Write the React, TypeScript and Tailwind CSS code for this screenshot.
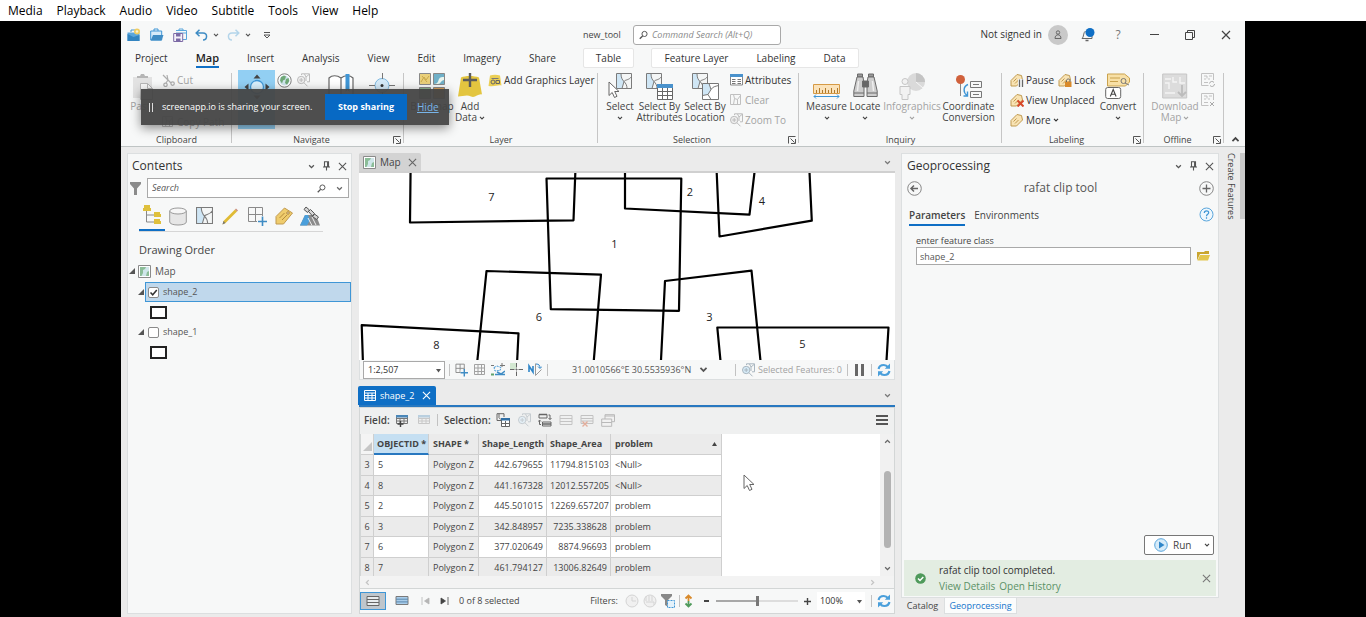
import React from "react";

type Kids = { children?: React.ReactNode };

const Caret = ({ s = 7, className = "" }: { s?: number; className?: string }) => (
  <svg width={s} height={s} viewBox="0 0 8 8" className={className} fill="none" stroke="currentColor" strokeWidth="1.5">
    <path d="M1.3 2.6 4 5.3 6.7 2.6" />
  </svg>
);

const Close = ({ s = 9 }: { s?: number }) => (
  <svg width={s} height={s} viewBox="0 0 10 10" fill="none" stroke="currentColor" strokeWidth="1.2">
    <path d="M1 1 9 9M9 1 1 9" />
  </svg>
);

const Pin = () => (
  <svg width="9" height="11" viewBox="0 0 9 11" fill="none" stroke="currentColor" strokeWidth="1.1">
    <path d="M2.500.8h4v5h-4zM5.600.8v5M1 6h7M4.500 6V9.500" />
  </svg>
);

const Magnifier = ({ s = 12 }: { s?: number }) => (
  <svg width={s} height={s} viewBox="0 0 12 12" fill="none" stroke="#555" strokeWidth="1.3">
    <circle cx="7.3" cy="4.6" r="3.4" />
    <path d="M4.8 7.2 1 11" strokeWidth="1.8" />
  </svg>
);

const Refresh = () => (
  <svg width="14" height="14" viewBox="0 0 14 14" fill="none" stroke="#4a9fdb" strokeWidth="2.200">
    <path d="M1.600 6C2 3.600 4 2 6.800 2c1.900 0 3.200.8 4 2.100M12.400 8c-.4 2.400-2.400 4-5.200 4-1.900 0-3.200-.8-4-2.100" />
    <path d="M13 .6v5.200H7.800zM1 13.400V8.200h5.200z" fill="#4a9fdb" stroke="none" />
  </svg>
);

const Launcher = () => (
  <button aria-label="More options" className="absolute right-[3px] bottom-[2px] text-[#555]">
    <svg width="8" height="8" viewBox="0 0 8 8" fill="none" stroke="currentColor">
      <path d="M.5 7.500V.5H7.500M2.500 2.500 6.500 6.500M7.500 3V7.500H3" />
    </svg>
  </button>
);

const MapParcel = ({ x = 0, y = 0, s = 16 }: { x?: number; y?: number; s?: number }) => (
  <g transform={`translate(${x} ${y}) scale(${s / 16})`}>
    <path d="M.5.5h15v15H.5z" fill="#f4f6f6" />
    <path d="M.5.5H5c0 4 1 6 3 8l-2 7H.5z" fill="#cfe6f5" />
    <path d="M.5.5h15v15H.5zM5 .5c0 4 1 6 3 8l-2 7M8 8.500c1-2 5-1 7.500-5M8 8.500c2 2 3 4 3 7" fill="none" stroke="#7b7b7b" />
  </g>
);

const PasteIcon = () => (
  <svg width="24" height="28" viewBox="0 0 24 28">
    <path d="M2 4h19v21H2z" fill="#e2e2e2" />
    <path d="M6 3h3l1-2h3l1 2h3v2H6z" fill="#b5b5b5" />
    <path d="M9.500 10.500h7l5 5v11h-12z" fill="#f6f6f6" stroke="#b5b5b5" />
    <path d="M16.500 10.500v5h5" fill="none" stroke="#b5b5b5" />
  </svg>
);

const CutIcon = () => (
  <svg width="13" height="13" viewBox="0 0 13 13" fill="none" stroke="#adadad" strokeWidth="1.200">
    <path d="M1 1l8 8M5 1l1 5 3 3M6 6 4 9" />
    <circle cx="10.600" cy="9.600" r="1.700" />
    <circle cx="3.500" cy="10.800" r="1.700" />
  </svg>
);

const ExploreIcon = () => (
  <svg width="28" height="28" viewBox="0 0 28 28">
    <circle cx="14" cy="14" r="6.500" fill="#d8effc" stroke="#3f96d6" strokeWidth="1.300" />
    <path d="M14 1.500l3.500 4h-7zM14 26.500l3.500-4h-7zM1.500 14l4-3.500v7zM26.500 14l-4-3.500v7z" fill="#444" />
  </svg>
);

const GlobeIcon = () => (
  <svg width="15" height="15" viewBox="0 0 15 15">
    <circle cx="7.500" cy="7.500" r="6.700" fill="#fff" stroke="#7f7f7f" />
    <circle cx="7.500" cy="7.500" r="5" fill="#cfe4ec" />
    <path d="M4 4l3-1.500 2 1-1 3-2 1-1 3-2-3zM9 6l2.500-1 .8 3L10 11.800 8 10z" fill="#6fa877" />
  </svg>
);

const ZoomSelIcon = ({ c = "#bcbcbc", lens = "#eeeeee" }: { c?: string; lens?: string }) => (
  <svg width="14" height="14" viewBox="0 0 14 14" fill="none" stroke={c}>
    <path d="M5.500 2V.8h8v8H11M8.500 1l1.500 3 3-2.500M10 4v4" />
    <circle cx="5.200" cy="7" r="3.700" fill={lens} />
    <path d="M5.200 5v4M3.200 7h4M8 9.800l3.500 3.500" />
  </svg>
);

const BookmarkIcon = () => (
  <svg width="28" height="28" viewBox="0 0 28 28" fill="none" stroke="#666" strokeWidth="1.200">
    <path d="M2 22V5c3-3 8-3 12 0 4-3 9-3 12 0v17M14 5v18" fill="#fff" />
    <path d="M18.500 1h4v18l-2-2-2 2z" fill="#3f96d6" stroke="none" />
  </svg>
);

const GoToIcon = () => (
  <svg width="26" height="26" viewBox="0 0 26 26" fill="none" stroke="#777">
    <circle cx="13" cy="12.500" r="7" fill="#d6ebf9" stroke="#7fb9e0" />
    <path d="M13.500 0v6M13.500 19v6M0 12.500h6M20 12.500h6" />
    <circle cx="13" cy="12.500" r="1.500" fill="#333" stroke="none" />
  </svg>
);

const BasemapIcon = () => (
  <svg width="26" height="26" viewBox="0 0 26 26" stroke="#888">
    <path d="M.5.5h11v11H.5z" fill="#ead07a" />
    <path d="M2 9l3-5 2 3 3-4M3 3l5 6" stroke="#c9a84a" fill="none" />
    <path d="M14.500.5h11v11h-11z" fill="#6fb0c8" />
    <path d="M15 11c4 0 4-3 5-5s3-2 5-2v3c-3 0-3 4-6 4z" fill="#eaf5ee" stroke="none" />
    <path d="M.5 14.500h11v11H.5z" fill="#8fb38d" />
    <path d="M14.500 14.500h11v11h-11z" fill="#d9a05a" />
  </svg>
);

const AddDataIcon = () => (
  <svg width="26" height="26" viewBox="0 0 26 26">
    <path d="M4 4.500c4-2 13-2 18 0l3 17c-4-1-7 4-11 2s-8 0-13 0z" fill="#e3c53f" />
    <path d="M13 0v14M6 7h14" stroke="#5b5b5b" strokeWidth="2.400" />
  </svg>
);

const GraphicsIcon = () => (
  <svg width="14" height="13" viewBox="0 0 14 13">
    <path d="M2 1.500c3-1 7-1 10 0l1.500 10c-4-1-6 1.500-13 .5z" fill="#ebcf55" />
    <path d="M3.500 4.500h7" stroke="#777" />
    <circle cx="5" cy="8" r="2" fill="none" stroke="#666" />
    <path d="M8 6.500h3.500v3H8z" fill="none" stroke="#666" />
  </svg>
);

const Pointer = ({ x, y }: { x: number; y: number }) => (
  <path transform={`translate(${x} ${y})`} d="M0 0v13.500l3.200-3 2.300 5 2.500-1.200-2.300-4.800H10z" fill="#fff" stroke="#666" />
);

const SelectIcon = () => (
  <svg width="26" height="27" viewBox="0 0 26 27">
    <MapParcel x={9} y={0} s={16} />
    <Pointer x={2} y={9} />
  </svg>
);

const SelectAttrIcon = () => (
  <svg width="27" height="27" viewBox="0 0 27 27">
    <MapParcel x={0} y={0} s={16} />
    <path d="M11.500 11.500h15v15h-15z" fill="#fff" stroke="#666" />
    <path d="M11 11h16v4H11z" fill="#4a92cc" />
    <path d="M11.500 18.500h15M11.500 22.500h15M16.500 15v11.500M21.500 15v11.500" stroke="#666" />
  </svg>
);

const SelectLocIcon = () => (
  <svg width="27" height="27" viewBox="0 0 27 27">
    <MapParcel x={0} y={0} s={16} />
    <path d="M10.500 10.500h16v16h-16z" fill="#fff" />
    <path d="M10.500 10.500H17l2 6-3 5-5.500 1z" fill="#cfe6f5" />
    <path d="M10.500 10.500h16v16h-16zM17 10.500l2 6-3 5-5.500 1M19 16.500c2-3 4-3 7.500-4M16 21.500l3 5" fill="none" stroke="#777" />
  </svg>
);

const AttrIcon = () => (
  <svg width="13" height="12" viewBox="0 0 13 12">
    <path d="M.5.5h12v10.500H.5z" fill="#fff" stroke="#888" />
    <path d="M0 0h13v3H0z" fill="#4a92cc" />
    <path d="M2 5.500h3.500M2 7.500h3.500M2 9.500h3.500M7.500 5.500H11M7.500 7.500H11M7.500 9.500H11" stroke="#777" />
  </svg>
);

const ClearIcon = () => (
  <svg width="12" height="12" viewBox="0 0 12 12" fill="none" stroke="#c0c0c0">
    <path d="M.5.5h10v10H.5zM3.500.5l1 4-1 6M4.500 4.500l3 1 3-4M7.500 5.500v5" />
  </svg>
);

const RulerIcon = () => (
  <svg width="27" height="27" viewBox="0 0 27 27" fill="none">
    <path d="M.5 11.500h26v9H.5z" fill="#fbe3bb" stroke="#d69a45" />
    <path d="M3.500 20v-3M6.500 20v-5M9.500 20v-3M12.500 20v-5M15.500 20v-3M18.500 20v-5M21.500 20v-3M24.500 20v-5" stroke="#b07a2c" />
    <path d="M1 23.500h25M3 21.500l-2 2 2 2M24 21.500l2 2-2 2" stroke="#3f96d6" />
  </svg>
);

const BinocularIcon = () => (
  <svg width="25" height="26" viewBox="0 0 25 26" stroke="#6b6b6b" fill="#cdcdcd">
    <path d="M4.500 1h5v3h-5zM15.500 1h5v3h-5z" fill="#9a9a9a" />
    <path d="M4 4h6l1 6v13.500H.8V18z" />
    <path d="M21 4h-6l-1 6v13.500h10.200V18z" />
    <path d="M9.500 8h6v6h-6z" fill="#666" />
    <path d="M1 20h10M14 20h10" />
    <path d="M5.500 8 4.500 18M19.500 8l1 10" stroke="#efefef" strokeWidth="1.500" />
  </svg>
);

const InfographicsIcon = () => (
  <svg width="28" height="27" viewBox="0 0 28 27">
    <circle cx="18" cy="9" r="9" fill="#dadada" />
    <path d="M18 9V0a9 9 0 0 1 9 9z" fill="#c4c4c4" />
    <path d="M18 9l7 6" stroke="#f7f7f7" />
    <circle cx="7" cy="8.500" r="3" fill="#f2f2f2" stroke="#c6c6c6" />
    <path d="M2 13.500h10v8h-2v5H4v-5H2z" fill="#f2f2f2" stroke="#c6c6c6" />
  </svg>
);

const CoordIcon = () => (
  <svg width="27" height="27" viewBox="0 0 27 27" fill="none">
    <path d="M5.500 8v15" stroke="#888" />
    <circle cx="5.500" cy="6.500" r="4.500" fill="#d0613c" />
    <path d="M13 11.500c-5 2-5 8-1 11M12.500 18.500v4.500H8.500" stroke="#3f96d6" strokeWidth="1.400" />
    <path d="M15.500 8.500h11v6h-11zM15.500 18.500h11v6h-11zM18 11.500h6M18 21.500h6" stroke="#777" />
  </svg>
);

const Tag = ({ children }: Kids) => (
  <svg width="14" height="14" viewBox="0 0 14 14">
    <path d="M1 7.500 7 1.500l4.500 1 1 4.500-6 6H1z" fill="#f8e3b4" stroke="#c09a50" />
    <path d="M3.500 8.500l3-3M5 10.500l3.500-3.500" stroke="#c09a50" />
    {children}
  </svg>
);

const PauseTag = () => (
  <Tag>
    <path d="M8 6h6v8H8z" fill="#f8f9f9" />
    <path d="M9.500 6.500V14M12.500 6.500V14" stroke="#666" strokeWidth="1.300" />
  </Tag>
);
const LockTag = () => (
  <Tag>
    <path d="M7 8.500h6.500V14H7z" fill="#d98a2b" />
    <path d="M8.500 9V7.500c0-2 3.500-2 3.500 0V9" fill="none" stroke="#666" />
  </Tag>
);
const UnplacedTag = () => (
  <Tag>
    <path d="M7.500 7.500l6 6M13.500 7.500l-6 6" stroke="#d6492a" strokeWidth="2" />
  </Tag>
);

const ConvertIcon = () => (
  <svg width="26" height="27" viewBox="0 0 26 27">
    <path d="M2.500 1h17l5 4v4l-4 4h-18z" fill="#f8e0a6" stroke="#c9a24e" />
    <path d="M5 5h10M5 8.500h8" stroke="#c9a24e" />
    <circle cx="18.500" cy="8" r="2.500" fill="none" stroke="#777" />
    <path d="M20 10l4 2" stroke="#777" />
    <rect x=".7" y="14.500" width="15" height="11" rx="2" fill="#fff" stroke="#666" />
    <path d="M5.300 23.500 8.200 16.500l2.900 7M6.300 21.300h3.800" fill="none" stroke="#444" strokeWidth="1.100" />
  </svg>
);

const DownloadIcon = () => (
  <svg width="26" height="26" viewBox="0 0 26 26">
    <path d="M.7 1h24v24H.7z" fill="#dcdcdc" stroke="#c6c6c6" />
    <path d="M3 6h6M3 10h4v6M11 4v5h4M18 4v6h5M3 20h10" stroke="#f4f4f4" strokeWidth="1.400" fill="none" />
    <path d="M20 12v11M16 19l4 4 4-4" stroke="#bcbcbc" strokeWidth="1.800" fill="none" />
  </svg>
);

const OfflineSmall = ({ x = false }: { x?: boolean }) => (
  <svg width="14" height="14" viewBox="0 0 14 14" fill="none" stroke="#c2c2c2">
    <path d="M12.500 7V.5H.5v12h7M3 3h3v2.500M8 3h3M3 6h2M3 9.500h4M8 5v2" />
    {x ? <path d="M9 9l4 4M13 9l-4 4" stroke="#aaa" /> : <path d="M8.500 10.500a2.500 2.500 0 0 1 4.500-1M13.500 11a2.500 2.500 0 0 1-4.500 1.500" stroke="#aaa" />}
  </svg>
);

function Big({ icon, lines = [], label, caret, inline, dim, className = "" }: { icon: React.ReactNode; lines?: string[]; label?: string; caret?: boolean; inline?: boolean; dim?: boolean; className?: string }) {
  return (
    <button aria-label={label} className={`flex shrink-0 flex-col items-center pt-[3px] leading-[11px] whitespace-nowrap ${dim ? "text-[#a3a3a3]" : "text-[#444]"} ${className}`}>
      <span className="flex h-7 items-start justify-center">{icon}</span>
      {lines.map((l, i) => (
        <span key={l} className="flex items-center gap-[2px]">
          {l}
          {inline && i === lines.length - 1 && <Caret s={6} />}
        </span>
      ))}
      {caret && <Caret s={6} className="mt-[3px]" />}
    </button>
  );
}

function Small({ icon, label, dim, caret }: { icon: React.ReactNode; label: string; dim?: boolean; caret?: boolean }) {
  return (
    <button className={`flex h-5 items-center gap-[2px] whitespace-nowrap ${dim ? "text-[#a3a3a3]" : "text-[#333]"}`}>
      <span className="flex w-[14px] justify-center">{icon}</span>
      {label}
      {caret && <Caret s={6} />}
    </button>
  );
}

function Group({ name, launcher, className, children }: Kids & { name: string; launcher?: boolean; className: string }) {
  return (
    <section aria-label={name} className={`relative flex shrink-0 flex-col ${className}`}>
      <div className="flex h-[62px]">{children}</div>
      <div className={`h-[14px] text-center text-[9px] leading-[15px] text-[#444] ${launcher ? "pr-[13px]" : ""}`}>{name}</div>
      {launcher && <Launcher />}
      <span className="absolute top-[3px] right-0 bottom-[3px] w-px bg-[#c6c6c6]" />
    </section>
  );
}

function TitleBar() {
  return (
    <header className="flex h-[27px] items-center text-[#444]">
      <div className="flex w-[462px] items-center pl-[6px] text-[#555]">
        <button aria-label="New project">
          <svg width="14" height="14" viewBox="0 0 14 14">
            <path d="M.5 4.500h12v8.500H.5z" fill="#5aa6dc" />
            <path d="M4 4V2h4" fill="none" stroke="#3f96d6" />
            <path d="M.5 6l6 3 6-2v6H.5z" fill="#3284c0" />
            <circle cx="10" cy="3.500" r="3" fill="#f0cd62" />
            <circle cx="10" cy="3.500" r="1.200" fill="#fdf3cf" />
          </svg>
        </button>
        <button aria-label="Open project" className="ml-[9px]">
          <svg width="14" height="13" viewBox="0 0 14 13">
            <path d="M.7 3h11v9H.7z" fill="#d6ebf9" stroke="#3f96d6" />
            <path d="M4 3V1h4v2" fill="none" stroke="#3f96d6" />
            <path d="M3 7h10.500l-2 5.500H.7z" fill="#3f8cc4" />
          </svg>
        </button>
        <button aria-label="Save project" className="ml-[9px]">
          <svg width="14" height="14" viewBox="0 0 14 14" fill="none">
            <path d="M3 2.500h10.500v9H10M3 5h10" stroke="#5aa6dc" />
            <path d="M6 2.500V1h4v1.500" stroke="#5aa6dc" />
            <path d="M.7 5.500h9v8h-9z" fill="#f4f1f9" stroke="#7c6aa5" />
            <path d="M3 5.500h4.500v3H3zM3 10.500h4.500v3H3z" fill="#7c6aa5" />
          </svg>
        </button>
        <button aria-label="Undo" className="ml-2 text-[#3f8cc4]">
          <svg width="13" height="12" viewBox="0 0 13 12" fill="none" stroke="currentColor" strokeWidth="1.500">
            <path d="M4.500.8 1.200 4l3.300 3.200M1.500 4H8c5 0 4.500 7 0 7" />
          </svg>
        </button>
        <Caret s={6} className="ml-[5px]" />
        <button aria-label="Redo" className="ml-2 text-[#b4d5ea]">
          <svg width="13" height="12" viewBox="0 0 13 12" fill="none" stroke="currentColor" strokeWidth="1.500">
            <path d="M8.500.8 11.800 4 8.500 7.200M11.500 4H5c-5 0-4.500 7 0 7" />
          </svg>
        </button>
        <Caret s={6} className="ml-[5px]" />
        <button aria-label="Customize toolbar" className="ml-3">
          <svg width="8" height="8" viewBox="0 0 8 8" fill="none" stroke="currentColor">
            <path d="M1 1.500h6M1 4l3 3 3-3z" />
          </svg>
        </button>
      </div>
      <span className="w-[50px] text-[9px]">new_tool</span>
      <label className="flex h-5 w-[148px] items-center gap-1 rounded-[3px] border border-[#a9a9a9] bg-white pl-[5px]">
        <Magnifier s={10} />
        <input aria-label="Command search" placeholder="Command Search (Alt+Q)" className="w-full min-w-0 bg-transparent text-[9px] italic outline-none placeholder:text-[#8a8a8a]" />
      </label>
      <div className="ml-auto flex items-center pr-px text-[#333]">
        <span className="mr-1.5">Not signed in</span>
        <span className="flex h-5 w-5 items-center justify-center rounded-full bg-[#c9c9c9]">
          <svg width="8" height="9" viewBox="0 0 8 9" fill="none" stroke="#666">
            <circle cx="4" cy="2.500" r="1.700" />
            <path d="M1 8.500c0-5 6-5 6 0z" />
          </svg>
        </span>
        <button aria-label="Notifications" className="ml-2 flex w-6 justify-center">
          <svg width="14" height="14" viewBox="0 0 14 14" fill="none">
            <path d="M1 10.500c2-1 1-6 3.500-7.500M1 10.500h10V8" stroke="#666" />
            <path d="M4.500 12.500h3" stroke="#666" strokeWidth="1.500" />
            <circle cx="9" cy="4.500" r="4.500" fill="#0f6fc5" />
          </svg>
        </button>
        <button aria-label="Help" className="w-9 text-[12px] text-[#777]">?</button>
        <button aria-label="Minimize" className="flex w-9 justify-center">
          <svg width="9" height="9" viewBox="0 0 9 9" stroke="#444"><path d="M0 4.500h9" /></svg>
        </button>
        <button aria-label="Restore" className="flex w-9 justify-center">
          <svg width="10" height="10" viewBox="0 0 10 10" fill="none" stroke="#444"><path d="M.5 2.500h7v7h-7zM2.500 2.500v-2h7v7h-2" /></svg>
        </button>
        <button aria-label="Close" className="flex w-9 justify-center text-[#444]"><Close s={10} /></button>
      </div>
    </header>
  );
}

function RibbonTabs() {
  const tabs = ["Project", "Map", "Insert", "Analysis", "View", "Edit", "Imagery", "Share"];
  return (
    <nav className="flex h-[22px] items-start pl-[14px] text-[#333]">
      <div className="flex w-[448px] shrink-0 gap-[28px]">
        {tabs.map((t) => (
          <button key={t} className={`h-[20px] leading-[20px] ${t === "Map" ? "border-b-2 border-[#0f6fc5] text-[11px] font-semibold text-[#222]" : ""}`}>{t}</button>
        ))}
      </div>
      <div className="flex gap-[17px]">
        <div className="flex h-5 w-[51px] justify-center rounded-[2px] border border-[#e6e6e6] bg-white leading-[19px]">
          <button>Table</button>
        </div>
        <div className="flex h-5 w-[208px] justify-center gap-[28px] rounded-[2px] border border-[#e6e6e6] bg-white leading-[19px]">
          <button>Feature Layer</button>
          <button>Labeling</button>
          <button>Data</button>
        </div>
      </div>
    </nav>
  );
}

function Ribbon() {
  return (
    <div className="relative flex h-[77px] border-b border-[#bfc4c4]">
      <Group name="Clipboard" className="w-[111px]">
        <Big icon={<PasteIcon />} lines={["Paste"]} dim className="ml-2 w-[28px]" />
        <div className="ml-1 flex flex-col justify-between">
          <Small icon={<CutIcon />} label="Cut" dim />
          <Small icon={<ClearIcon />} label="Copy Path" dim />
        </div>
      </Group>
      <Group name="Navigate" launcher className="w-[172px]">
        <Big icon={<ExploreIcon />} label="Explore" className="ml-[6px] h-[59px] w-[37px] bg-[#92cff3]" />
        <div className="ml-[2px] grid h-5 grid-cols-2 items-center gap-1">
          <GlobeIcon />
          <ZoomSelIcon />
        </div>
        <Big icon={<BookmarkIcon />} label="Bookmarks" className="ml-3 w-[36px]" />
        <Big icon={<GoToIcon />} label="Go To XY" className="ml-[6px] w-[34px]" />
      </Group>
      <Group name="Layer" className="w-[194px]">
        <Big icon={<BasemapIcon />} lines={["Basemap"]} className="ml-[6px] w-[44px]" />
        <Big icon={<AddDataIcon />} lines={["Add", "Data"]} inline className="w-[32px]" />
        <div className="ml-[2px]">
          <Small icon={<GraphicsIcon />} label="Add Graphics Layer" />
        </div>
      </Group>
      <Group name="Selection" launcher className="w-[201px]">
        <Big icon={<SelectIcon />} lines={["Select"]} caret className="ml-[5px] w-[34px]" />
        <Big icon={<SelectAttrIcon />} lines={["Select By", "Attributes"]} className="w-[45px]" />
        <Big icon={<SelectLocIcon />} lines={["Select By", "Location"]} className="w-[46px]" />
        <div className="ml-px">
          <Small icon={<AttrIcon />} label="Attributes" />
          <Small icon={<ClearIcon />} label="Clear" dim />
          <Small icon={<ZoomSelIcon />} label="Zoom To" dim />
        </div>
      </Group>
      <Group name="Inquiry" className="w-[203px]">
        <Big icon={<RulerIcon />} lines={["Measure"]} caret className="ml-[7px] w-[41px]" />
        <Big icon={<BinocularIcon />} lines={["Locate"]} caret className="w-[36px]" />
        <Big icon={<InfographicsIcon />} lines={["Infographics"]} caret dim className="w-[58px]" />
        <Big icon={<CoordIcon />} lines={["Coordinate", "Conversion"]} className="w-[55px]" />
      </Group>
      <Group name="Labeling" launcher className="w-[142px]">
        <div className="ml-2 w-[88px]">
          <div className="flex gap-1">
            <Small icon={<PauseTag />} label="Pause" />
            <Small icon={<LockTag />} label="Lock" />
          </div>
          <Small icon={<UnplacedTag />} label="View Unplaced" />
          <Small icon={<Tag />} label="More" caret />
        </div>
        <Big icon={<ConvertIcon />} lines={["Convert"]} caret className="w-[40px]" />
      </Group>
      <Group name="Offline" launcher className="w-[80px]">
        <Big icon={<DownloadIcon />} lines={["Download", "Map"]} inline dim className="ml-2 w-[46px]" />
        <div className="ml-[3px] flex flex-col">
          <button aria-label="Sync" className="flex h-5 items-center"><OfflineSmall /></button>
          <button aria-label="Remove" className="flex h-5 items-center"><OfflineSmall x /></button>
        </div>
      </Group>
      <button aria-label="Collapse ribbon" className="mt-auto mb-[2px] ml-[7px] rotate-180 text-[#444]"><Caret s={9} /></button>

      <div className="absolute top-[19px] left-[20px] z-10 flex h-9 w-[308px] items-center bg-[#454545]/95 text-white shadow-[0_3px_10px_rgba(0,0,0,0.45)]">
        <span className="mr-[9px] ml-2 flex gap-[2px]">
          <i className="h-[9px] w-px bg-[#ddd]" />
          <i className="h-[9px] w-px bg-[#ddd]" />
        </span>
        <span className="w-[163px] text-[9px] whitespace-nowrap">screenapp.io is sharing your screen.</span>
        <button className="h-[26px] w-[82px] bg-[#0769c4] text-[9px] font-bold whitespace-nowrap">Stop sharing</button>
        <a href="#hide" className="ml-[10px] text-[#78b4e8] underline">Hide</a>
      </div>
    </div>
  );
}

const PaneTools = () => (
  <div className="ml-auto flex items-center gap-[7px] text-[#555]">
    <button aria-label="Pane menu"><Caret s={7} /></button>
    <button aria-label="Auto hide"><Pin /></button>
    <button aria-label="Close pane"><Close /></button>
  </div>
);

const MapThumb = ({ s = 13 }: { s?: number }) => (
  <svg width={s} height={s} viewBox="0 0 13 13">
    <path d="M.5.5h12v12H.5z" fill="#fff" stroke="#8a8a8a" />
    <path d="M2 2h9v9H2z" fill="#cfe6ea" />
    <path d="M2 2h6L7 4 5 5v3L3.500 11H2zM9 7l2-1v5H8z" fill="#8bbd98" />
  </svg>
);

function Expander() {
  return (
    <svg width="6" height="6" viewBox="0 0 6 6"><path d="M6 0v6H0z" fill="#555" /></svg>
  );
}

function LayerRow({ name, checked }: { name: string; checked?: boolean }) {
  return (
    <li>
      <div className="flex h-5 items-center pl-[10px]">
        <Expander />
        <label className={`ml-px flex h-5 flex-1 items-center border pl-[2px] ${checked ? "border-[#3f96d6] bg-[#c0d8ec]" : "border-transparent"}`}>
          <span className="relative flex h-[11px] w-[11px]">
            <input type="checkbox" defaultChecked={checked} className="peer h-[11px] w-[11px] appearance-none rounded-[2px] border border-[#8a8a8a] bg-white" />
            <svg viewBox="0 0 11 11" className="pointer-events-none absolute inset-0 hidden peer-checked:block" fill="none" stroke="#333" strokeWidth="1.500"><path d="M2.500 5.500 4.700 7.800 8.800 3" /></svg>
          </span>
          <span className="ml-1 text-[9px]">{name}</span>
        </label>
      </div>
      <div className="flex h-5 items-center pl-[22px]">
        <span className="h-[13px] w-[17px] border-2 border-[#222] bg-white" />
      </div>
    </li>
  );
}

function Contents() {
  return (
    <aside className="flex w-[225px] shrink-0 flex-col border border-[#dcdfe0] bg-[#f7f8f8]">
      <div className="flex h-[24px] items-center pr-1 pl-1">
        <h2 className="text-[12px] text-[#333]">Contents</h2>
        <PaneTools />
      </div>
      <div className="flex items-center gap-[6px] pr-[2px] pl-[2px]">
        <svg width="11" height="13" viewBox="0 0 11 13"><path d="M0 0h11v2L7 6.500V13H4V6.500L0 2z" fill="#8b8b8b" /></svg>
        <div className="flex h-5 flex-1 items-center gap-[10px] border border-[#a9a9a9] bg-white pr-[5px] text-[#666]">
          <input aria-label="Search contents" placeholder="Search" className="w-full min-w-0 pl-1 text-[9px] italic outline-none placeholder:text-[#555]" />
          <Magnifier s={11} />
          <Caret s={7} className="shrink-0" />
        </div>
      </div>
      <div className="ml-[11px] mt-[3px] flex h-[31px] w-[184px] border-b border-[#d6d6d6]">
        <button aria-label="List by drawing order" className="flex w-[26px] items-center justify-center border-b-2 border-[#0f6fc5]">
          <svg width="20" height="20" viewBox="0 0 20 20"><path d="M4.500 6v11H12M4.500 10H12" fill="none" stroke="#888" /><path d="M2 0h6v3h1v3H1V3h1zM12 7h6v2h1v3h-7zM12 14h6v2h1v3h-7z" fill="#dfc03c" /></svg>
        </button>
        <button aria-label="List by data source" className="flex w-[27px] items-center justify-center">
          <svg width="18" height="19" viewBox="0 0 18 19" fill="#e6e6e6" stroke="#9a9a9a"><path d="M.7 4v11c0 4 16.600 4 16.600 0V4" /><ellipse cx="9" cy="4" rx="8.300" ry="3" fill="#f6f6f6" /></svg>
        </button>
        <button aria-label="List by selection" className="flex w-[27px] items-center justify-center">
          <svg width="17" height="18" viewBox="0 0 17 18"><MapParcel s={17} /></svg>
        </button>
        <button aria-label="List by editing" className="flex w-[26px] items-center justify-center">
          <svg width="17" height="17" viewBox="0 0 17 17"><path d="M.5 16.500l1-3.500L13 1.500 15 3.500 3.500 15z" fill="#e0bb35" /><path d="M13 1.500 14 .5 16 2.500l-1 1z" fill="#c98a7a" /><path d="M.5 16.500l1-3.500 2 2z" fill="#777" /></svg>
        </button>
        <button aria-label="List by snapping" className="flex w-[27px] items-center justify-center">
          <svg width="19" height="19" viewBox="0 0 19 19" fill="none"><path d="M.5.5h14v14H.5zM7.500.5v14M.5 7.500h14" stroke="#8a8a8a" /><path d="M9 9h10v10H9z" fill="#f7f8f8" /><path d="M14.500 9.500V19M10 14.500h9" stroke="#3f8cc4" strokeWidth="1.600" /></svg>
        </button>
        <button aria-label="List by labeling" className="flex w-[27px] items-center justify-center">
          <svg width="18" height="18" viewBox="0 0 18 18"><path d="M1 9.500 9.500 1l8 5-9 11H1z" fill="#efcc6d" stroke="#c09a50" /><path d="M4.500 11l5-5M7 13l5-5" stroke="#b58a3c" /><circle cx="13" cy="6" r="1.200" fill="#fff" stroke="#a87a2a" /></svg>
        </button>
        <button aria-label="List by imagery" className="flex w-[26px] items-center justify-center">
          <svg width="20" height="20" viewBox="0 0 20 20"><path d="M5 9h11l4 10.500H0z" fill="#8b8b8b" /><path d="M5 9h3l2 5-3 5.500H0z" fill="#4a9fdb" /><path d="M8 12l4 7.500M12 11l4 8" stroke="#eee" /><path d="M6 1 4 3.500l3.500 3 2-2.500zM14.500 8l-2 2.500 4 3 2-2.500zM8.500 5.500l2-2 4 4-2 2.500z" fill="#d5d5d5" stroke="#555" /></svg>
        </button>
      </div>
      <h3 className="mt-[8px] pl-[11px] text-[11px] leading-[20px] text-[#444]">Drawing Order</h3>
      <ul className="mt-px text-[#555]">
        <li className="mb-px flex h-5 items-center pl-px">
          <Expander />
          <span className="ml-[3px]"><MapThumb /></span>
          <span className="ml-1">Map</span>
        </li>
        <LayerRow name="shape_2" checked />
        <LayerRow name="shape_1" />
      </ul>
    </aside>
  );
}

const shapes = [
  "410.600,168 410,222.500 573.500,220.300 575.500,168",
  "546.500,178.500 681.300,178.500 679,310.800 550.800,309.200 546.500,178.500 560,178.500",
  "625,168 625,208.500 749.500,214.600 755,168",
  "716.500,168 719.500,236.500 811.800,220.700 809.300,168",
  "477,364 486.500,271 601,274.700 593.500,364",
  "363,364 361.700,325.200 518.500,333.300 517,364",
  "660.800,364 665,281 751.500,270.600 760.800,364",
  "720.800,364 717.300,327.500 888.500,327.500 886.300,364",
];
const labels: [string, number, number][] = [
  ["7", 491.5, 201], ["1", 614.5, 248], ["2", 690, 196], ["4", 762, 205],
  ["6", 539, 321], ["3", 709.5, 321], ["8", 436.5, 349], ["5", 802.5, 348],
];

const Sep = () => <span className="h-3 w-px shrink-0 bg-[#c2c2c2]" />;

function MapView() {
  return (
    <section aria-label="Map view" className="shrink-0">
      <div className="flex h-5 items-end border-b-2 border-[#d0d0d0] pr-1">
        <div className="flex h-[18px] w-[62px] items-center gap-1 rounded-t-[2px] bg-[#d3d3d3] pl-1 text-[#444]">
          <MapThumb />
          <span>Map</span>
          <button aria-label="Close map" className="ml-[3px] text-[#666]"><Close /></button>
        </div>
        <button aria-label="Views" className="mb-[5px] ml-auto text-[#777]"><Caret /></button>
      </div>
      <svg className="block h-[187px] w-full bg-white" viewBox="359 173 536 187" preserveAspectRatio="xMidYMid slice">
        {shapes.map((p) => (
          <polyline key={p} points={p} fill="none" stroke="#000" strokeWidth="2.200" strokeLinejoin="round" />
        ))}
        {labels.map(([t, x, y]) => (
          <text key={t} x={x} y={y} textAnchor="middle" fontSize="11" fill="#222">{t}</text>
        ))}
      </svg>
      <div className="flex h-5 items-center border border-t-0 border-[#dcdfe0] bg-[#f7f8f8] pl-[3px] text-[9px] text-[#555]">
        <div className="relative">
          <select aria-label="Map scale" className="h-[18px] w-[82px] appearance-none border border-[#a9a9a9] bg-white pl-1 text-[#333]">
            <option>1:2,507</option>
          </select>
          <svg width="5" height="4" viewBox="0 0 5 4" className="pointer-events-none absolute top-2 right-1"><path d="M0 0h5L2.500 3.500z" fill="#555" /></svg>
        </div>
        <div className="ml-1 flex items-center gap-[5px]">
          <Sep />
          <svg width="13" height="14" viewBox="0 0 14 14" fill="none"><path d="M1 .7h9v9H1zM5.500.7v9M1 5.200h9" stroke="#8a8a8a" /><path d="M6 7h8v7H6z" fill="#f7f8f8" /><path d="M10 6v8M6 10h8" stroke="#3f8cc4" strokeWidth="1.500" /></svg>
          <svg width="13" height="13" viewBox="0 0 13 13" fill="none" stroke="#a2a2a2"><path d="M1.500 1.500h10v10h-10zM5 1.500v10M8.500 1.500v10M1.500 5h10M1.500 8.500h10" /></svg>
          <svg width="14" height="13" viewBox="0 0 14 13" fill="none"><path d="M3 4.500 6 3l4 1.500-1 3-5 .5z" stroke="#3f96d6" strokeDasharray="2 1" /><path d="M0 2.500h3M11 0v4M9 2.500h5" stroke="#777" /><path d="M0 11.500h3" stroke="#5fa36b" strokeWidth="2" /><path d="M4 11.500h10M6 9l4 2 4-3" stroke="#3f8cc4" strokeWidth="1.400" /></svg>
          <svg width="13" height="13" viewBox="0 0 13 13" fill="none"><path d="M0 0h6v6H0z" fill="#d3e8d2" /><path d="M6.500 0v4.500M6.500 8.500V13M0 6.500h4.500M8.500 6.500H13M5.500 6.500h2M6.500 5.500v2" stroke="#666" /></svg>
          <svg width="14" height="13" viewBox="0 0 14 13" fill="none"><path d="M1 9V3l4 6V3" stroke="#2f86c9" strokeWidth="1.600" /><path d="M7.500.5v12l6-6" stroke="#999" /><path d="M8 1c3 0 4 1.500 4 4M10 3.500 12 5.500l2-2" stroke="#2f86c9" /></svg>
          <Sep />
        </div>
        <span className="ml-[24px] whitespace-nowrap">31.0010566°E 30.5535936°N</span>
        <Caret s={9} className="ml-2" />
        <div className="ml-auto flex items-center gap-[5px] pr-[3px]">
          <Sep />
          <button className="flex items-center gap-[3px] whitespace-nowrap text-[#a3a3a3]">
            <ZoomSelIcon c="#a9b6bf" lens="#d6ebf8" />
            Selected Features: 0
          </button>
          <Sep />
          <button aria-label="Pause drawing" className="mx-[2px] flex gap-[3px]">
            <i className="h-3 w-[3px] bg-[#666]" />
            <i className="h-3 w-[3px] bg-[#666]" />
          </button>
          <Sep />
          <button aria-label="Refresh map"><Refresh /></button>
        </div>
      </div>
    </section>
  );
}

const rows = [
  ["3", "5", "442.679655", "11794.815103", "<Null>"],
  ["4", "8", "441.167328", "12012.557205", "<Null>"],
  ["5", "2", "445.501015", "12269.657207", "problem"],
  ["6", "3", "342.848957", "7235.338628", "problem"],
  ["7", "6", "377.020649", "8874.96693", "problem"],
  ["8", "7", "461.794127", "13006.82649", "problem"],
];

const ToolTable = ({ c, head, mark }: { c: string; head: string; mark?: React.ReactNode }) => (
  <svg width="14" height="13" viewBox="0 0 14 13" fill="none" stroke={c}>
    <path d="M1.500 1.500h11v8h-11zM1.500 4.500h11M1.500 7h11M5 4.500v5M9 4.500v5" />
    <path d="M1 1h12v2.500H1z" fill={head} stroke="none" />
    {mark}
  </svg>
);

const Lines = ({ c, fill = "none", s = 14 }: { c: string; fill?: string; s?: number }) => (
  <svg width={s} height="12" viewBox="0 0 14 12" stroke={c} fill={fill}>
    <path d="M1 1.500h12v9H1zM1 4.500h12M1 7.500h12" />
  </svg>
);

function AttributeTable() {
  const head = "border-r border-b border-[#cfcfcf] bg-[#ebebeb] px-1 text-left font-bold";
  return (
    <section aria-label="Attribute table" className="relative mt-[6px] flex min-h-0 flex-1 flex-col">
      <div className="flex h-[21px] items-center border-b-2 border-[#2878c0] pr-1">
        <div className="-ml-px flex h-[19px] w-[78px] items-center gap-1 rounded-t-[2px] bg-[#0f6fc5] pl-[6px] text-[9px] text-white">
          <svg width="12" height="11" viewBox="0 0 12 11" fill="none" stroke="#fff"><path d="M.5.5h11v10H.5zM.5 3h11M.5 5.500h11M.5 8h11M4 3v7.500M8 3v7.500" /></svg>
          shape_2
          <button aria-label="Close table" className="ml-1"><Close s={9} /></button>
        </div>
        <button aria-label="Tables" className="ml-auto text-[#777]"><Caret /></button>
      </div>
      <div className="flex min-h-0 flex-1 flex-col border border-[#d3d6d6] bg-[#f1f1f1]">
        <div className="flex h-[26px] shrink-0 items-center bg-[#eff0f0] pr-[6px] pb-[2px] pl-1 font-semibold text-[#444]">
          <span className="w-[31px]">Field:</span>
          <button aria-label="Add field" className="w-[22px]"><ToolTable c="#777" head="#4a86b8" mark={<path d="M5.500 7v6M2.500 10h6" stroke="#444" strokeWidth="1.400" />} /></button>
          <button aria-label="Calculate field" className="w-[20px]"><ToolTable c="#c8c8c8" head="#b9cfdf" /></button>
          <Sep />
          <span className="ml-[6px] w-[52px]">Selection:</span>
          <div className="flex items-center gap-[7px]">
            <button aria-label="Select by attributes">
              <svg width="14" height="14" viewBox="0 0 14 14" fill="none" stroke="#666"><path d="M6 7.500H1V.7h7V4M3 .7v4l2 2" /><path d="M5.500 5.500h8v8h-8z" fill="#fff" /><path d="M5 5h9v2.500H5z" fill="#2f6fa5" stroke="none" /><path d="M5.500 10.500h8M9.500 8v5.500" /></svg>
            </button>
            <button aria-label="Zoom to selection"><ZoomSelIcon c="#c6ccd0" lens="#e4eff6" /></button>
            <button aria-label="Switch selection">
              <svg width="14" height="14" viewBox="0 0 14 14" fill="none" stroke="#666"><path d="M1 1.500h8v3.500H1zM4.500 9h8.500v4H4.500zM10.500 2h1.500v4.500M3 11.500H1.500V7.500" /><path d="M1 1.500h8M5 11h8" strokeWidth="1.600" /><path d="M10.500 5 12 6.500 13.500 5M.5 8.500l1-1.500L3 8.500" /></svg>
            </button>
            <button aria-label="Clear selection"><Lines c="#c4c4c4" /></button>
            <button aria-label="Delete selection">
              <svg width="14" height="13" viewBox="0 0 14 13" fill="none" stroke="#c2c2c2"><path d="M1 1.500h12v8H1zM1 4.500h12M1 7h12" /><path d="M2.500 7.500l5 5M7.500 7.500l-5 5" stroke="#e3ad9b" strokeWidth="1.400" /></svg>
            </button>
            <button aria-label="Copy rows">
              <svg width="14" height="13" viewBox="0 0 14 13" fill="#f1f1f1" stroke="#b9b9b9"><path d="M4 .7h9.500v7H4z" /><path d="M4 2h9.500" /><path d="M.7 5h10v7.300H.7zM.7 8.500h10" /></svg>
            </button>
          </div>
          <button aria-label="Table menu" className="ml-auto flex flex-col gap-[2px]">
            <i className="h-[2px] w-3 bg-[#555]" />
            <i className="h-[2px] w-3 bg-[#555]" />
            <i className="h-[2px] w-3 bg-[#555]" />
          </button>
        </div>
        <div className="flex h-[142px] shrink-0">
          <div className="flex-1 overflow-hidden border-l border-[#d3d6d6] bg-white">
            <table className="w-[361px] table-fixed border-separate border-spacing-0 text-[9px] leading-[12px] text-[#444]">
              <colgroup>
                <col className="w-[13px]" />
                <col className="w-[55px]" />
                <col className="w-[50px]" />
                <col className="w-[68px]" />
                <col className="w-[64px]" />
                <col className="w-[111px]" />
              </colgroup>
              <thead>
                <tr className="h-[21px] whitespace-nowrap">
                  <th className="border-r border-b border-[#cfcfcf] bg-[#f4f4f4] p-0 align-bottom">
                    <svg width="9" height="9" viewBox="0 0 9 9" className="mb-[3px] ml-[2px]"><path d="M9 0v9H0z" fill="#c6c6c6" /></svg>
                  </th>
                  <th className="border-r border-b-2 border-r-[#cfcfcf] border-b-[#2878c0] bg-[#c5dff2] px-[3px] text-left font-bold">OBJECTID *</th>
                  <th className={head}>SHAPE *</th>
                  <th className="border-r border-b border-[#cfcfcf] bg-[#ebebeb] px-[3px] text-left font-bold">Shape_Length</th>
                  <th className="border-r border-b border-[#cfcfcf] bg-[#ebebeb] px-[3px] text-left font-bold">Shape_Area</th>
                  <th className={head}>
                    <span className="flex items-center justify-between">
                      problem
                      <svg width="5" height="4" viewBox="0 0 5 4"><path d="M0 4h5L2.500 0z" fill="#444" /></svg>
                    </span>
                  </th>
                </tr>
              </thead>
              <tbody>
                {rows.map(([n, id, len, area, prob]) => (
                  <tr key={n} className="bg-white odd:h-[21px] even:h-[20px] even:bg-[#ebebeb] [&>td]:border-r [&>td]:border-b [&>td]:border-[#cfcfcf] [&>td]:py-0">
                    <td className="bg-[#ebebeb] px-0 text-center">{n}</td>
                    <td className="px-1">{id}</td>
                    <td className="bg-[#ebebeb] px-1 whitespace-nowrap">Polygon Z</td>
                    <td className="px-[3px] text-right">{len}</td>
                    <td className="px-[3px] text-right">{area}</td>
                    <td className="px-1">{prob}</td>
                  </tr>
                ))}
              </tbody>
            </table>
          </div>
          <div className="flex w-[14px] flex-col items-center justify-between bg-[#f1f1f1] py-1 text-[#666]">
            <Caret s={7} className="rotate-180" />
            <span className="mt-[26px] mb-auto h-[77px] w-[7px] rounded-full bg-[#b3b3b3]" />
            <Caret s={7} />
          </div>
        </div>
        <div className="flex h-[13px] shrink-0 items-center justify-between border-b border-[#d3d6d6] bg-[#f3f3f3] pr-[18px] pl-1 text-[#c4c4c4]">
          <Caret s={7} className="rotate-90" />
          <Caret s={7} className="-rotate-90" />
        </div>
        <div className="flex min-h-0 flex-1 items-center bg-[#f7f8f8] pr-[3px] text-[9px] text-[#444]">
          <button aria-label="Show all records" className="flex h-[18px] w-[26px] items-center justify-center border border-[#3f96d6] bg-[#bfc6cc]"><Lines c="#666" fill="#e8ecee" /></button>
          <button aria-label="Show selected records" className="ml-[9px]">
            <svg width="14" height="12" viewBox="0 0 14 12"><path d="M1 1.500h12v8H1z" fill="#a9cdea" stroke="#7a7a7a" /><path d="M1 4.200h12M1 6.900h12" stroke="#5b88ad" /></svg>
          </button>
          <button aria-label="First" className="ml-[12px] text-[#b5b5b5]">
            <svg width="9" height="8" viewBox="0 0 9 8"><path d="M1 0v8M8 1v6L3.500 4z" fill="currentColor" stroke="currentColor" strokeWidth=".8" /></svg>
          </button>
          <button aria-label="Last" className="ml-[10px]">
            <svg width="9" height="8" viewBox="0 0 9 8"><path d="M8 0v8M1 1v6L5.500 4z" fill="currentColor" stroke="currentColor" strokeWidth=".8" /></svg>
          </button>
          <span className="ml-[10px] whitespace-nowrap">0 of 8 selected</span>
          <span className="ml-auto">Filters:</span>
          <div className="ml-[7px] flex items-center gap-1">
            <svg width="14" height="14" viewBox="0 0 14 14" fill="#f0f0f0" stroke="#d4d4d4"><circle cx="7" cy="7" r="6" /><path d="M7 3v4h4" /></svg>
            <svg width="14" height="14" viewBox="0 0 14 14" fill="#f0f0f0" stroke="#d4d4d4"><circle cx="7" cy="7" r="6" /><path d="M3 2v5M6 2v5M9 2v5M3 8h8v3" /></svg>
            <svg width="14" height="14" viewBox="0 0 14 14"><path d="M0 0h11v2L7 6v7L4 11V6L0 2z" fill="#888" /><path d="M6.500 6.500h7v7h-7z" fill="#e4f2fb" stroke="#3f96d6" strokeDasharray="2 1" /></svg>
            <Sep />
            <svg width="9" height="14" viewBox="0 0 9 14" fill="none" strokeWidth="1.800"><path d="M4.500 7V1.500M1.500 4.500l3-3 3 3" stroke="#d98a2b" /><path d="M4.500 7v5.500M1.500 9.500l3 3 3-3" stroke="#4f9a5b" /></svg>
          </div>
          <button aria-label="Zoom out" className="ml-[11px] flex h-3 items-center"><i className="h-[2px] w-[5px] bg-[#444]" /></button>
          <input
            aria-label="Table zoom"
            type="range"
            defaultValue={50}
            className="ml-[7px] h-3 w-[82px] appearance-none bg-transparent [&::-webkit-slider-runnable-track]:h-[2px] [&::-webkit-slider-runnable-track]:bg-[linear-gradient(to_right,#a8a8a8_50%,#dddddd_50%)] [&::-webkit-slider-thumb]:-mt-1 [&::-webkit-slider-thumb]:h-[10px] [&::-webkit-slider-thumb]:w-[3px] [&::-webkit-slider-thumb]:appearance-none [&::-webkit-slider-thumb]:bg-[#777]"
          />
          <button aria-label="Zoom in" className="ml-[6px]">
            <svg width="7" height="7" viewBox="0 0 7 7" stroke="#444" strokeWidth="1.400"><path d="M3.500 0v7M0 3.500h7" /></svg>
          </button>
          <div className="relative ml-[6px]">
            <select aria-label="Zoom level" className="h-[18px] w-[48px] appearance-none bg-white pl-[3px] text-[#333]">
              <option>100%</option>
            </select>
            <svg width="5" height="4" viewBox="0 0 5 4" className="pointer-events-none absolute top-2 right-[3px]"><path d="M0 0h5L2.500 3.500z" fill="#555" /></svg>
          </div>
          <span className="mr-[5px] ml-[6px] flex"><Sep /></span>
          <button aria-label="Refresh table"><Refresh /></button>
        </div>
      </div>
      <svg width="12" height="17" viewBox="-1 -1 12 17" className="pointer-events-none absolute top-[88px] left-[384px]"><Pointer x={0} y={0} /></svg>
    </section>
  );
}

function Geoprocessing() {
  return (
    <aside className="flex w-[318px] shrink-0 flex-col">
      <div className="flex flex-1 flex-col border border-[#dcdfe0] bg-[#f7f8f8]">
        <div className="flex h-[24px] items-center pr-1 pl-[5px]">
          <h2 className="text-[12px] text-[#333]">Geoprocessing</h2>
          <PaneTools />
        </div>
        <div className="flex h-5 items-center justify-between pr-1 pl-[5px] text-[#555]">
          <button aria-label="Back">
            <svg width="15" height="15" viewBox="0 0 15 15" fill="none" stroke="#888"><circle cx="7.500" cy="7.500" r="6.800" /><path d="M11 7.500H4.500M7 4.500l-3 3 3 3" stroke="#666" strokeWidth="1.500" /></svg>
          </button>
          <span className="text-[12px]">rafat clip tool</span>
          <button aria-label="Add to model">
            <svg width="15" height="15" viewBox="0 0 15 15" fill="none" stroke="#888"><circle cx="7.500" cy="7.500" r="6.800" /><path d="M7.500 3.500v8M3.500 7.500h8" stroke="#666" strokeWidth="1.300" /></svg>
          </button>
        </div>
        <div className="mt-[9px] flex h-[20px] items-start pr-1 pl-[7px] leading-[17px] text-[#444]">
          <button className="h-[19px] border-b-2 border-[#0f6fc5] font-semibold">Parameters</button>
          <button className="ml-[9px]">Environments</button>
          <button aria-label="Tool help" className="ml-auto">
            <svg width="15" height="15" viewBox="0 0 15 15" fill="none"><circle cx="7.500" cy="7.500" r="6.500" fill="#eef7fd" stroke="#5aa6dc" /><path d="M5.300 6c0-3 4.400-2.800 4.400-.3 0 1.700-2.200 1.600-2.200 3.500M7.500 10.300v1.400" stroke="#3f96d6" strokeWidth="1.200" /></svg>
          </button>
        </div>
        <div className="mt-2 pr-2 pl-[14px] text-[9px] text-[#444]">
          <label htmlFor="fc" className="block leading-[12px]">enter feature class</label>
          <div className="flex items-center gap-[6px]">
            <input id="fc" defaultValue="shape_2" className="h-[18px] min-w-0 flex-1 border border-[#a9a9a9] bg-white pl-[3px] text-[#555] outline-none" />
            <button aria-label="Browse">
              <svg width="13" height="10" viewBox="0 0 13 10"><path d="M0 9.500V1h7l1-1h4v3H3z" fill="#c9a52f" /><path d="M3 4h10l-2 5.500H.5z" fill="#e3c64e" /></svg>
            </button>
          </div>
        </div>
        <div className="mt-auto mr-1 ml-auto flex h-5 w-[70px] items-center rounded-[2px] border border-[#777] bg-white text-[#444]">
          <button className="ml-[9px] flex items-center gap-[5px]">
            <svg width="14" height="14" viewBox="0 0 14 14"><circle cx="7" cy="7" r="6.300" fill="#d6ebf9" stroke="#5aa6dc" /><path d="M5 3.500v7L10.500 7z" fill="#2f86c9" /></svg>
            Run
          </button>
          <button aria-label="Run options" className="mr-[3px] ml-auto"><Caret s={6} /></button>
        </div>
        <div className="mx-[2px] mt-[5px] mb-px flex h-[36px] items-center bg-[#e3ede2] pr-[5px]">
          <svg width="11" height="11" viewBox="0 0 11 11" className="mr-[13px] ml-[11px]"><circle cx="5.500" cy="5.500" r="5.300" fill="#4f9a5b" /><path d="M3 5.500 5 7.500 8.300 4" fill="none" stroke="#fff" strokeWidth="1.500" /></svg>
          <div className="leading-[16px] text-[#333]">
            <p>rafat clip tool completed.</p>
            <p className="flex gap-1">
              <a href="#details" className="text-[#5b9166]">View Details</a>
              <a href="#history" className="text-[#5b9166]">Open History</a>
            </p>
          </div>
          <button aria-label="Dismiss" className="ml-auto text-[#777]"><Close s={9} /></button>
        </div>
      </div>
      <div className="flex h-4 text-[9px] text-[#444]">
        <button className="w-[43px] leading-[16px]">Catalog</button>
        <button className="w-[73px] border-x border-b border-[#dcdfe0] bg-[#fbfcfc] leading-[16px] text-[#1274cc]">Geoprocessing</button>
      </div>
    </aside>
  );
}

export default function App() {
  return (
    <div className="flex min-h-screen flex-col bg-black font-['Open_Sans','Noto_Sans',sans-serif] text-[10px]">
      <nav className="flex h-[21px] items-center gap-[14px] bg-white pl-2 text-[12px] text-black">
        {["Media", "Playback", "Audio", "Video", "Subtitle", "Tools", "View", "Help"].map((m) => (
          <button key={m}>{m}</button>
        ))}
      </nav>
      <div className="mx-[121px] flex flex-1 flex-col bg-[#ebebeb]">
        <div className="bg-[#f7f8f8]">
          <TitleBar />
          <RibbonTabs />
          <Ribbon />
        </div>
        <main className="flex flex-1 pt-[6px] pb-[3px] pl-[6px]">
          <Contents />
          <div className="flex min-w-0 flex-1 flex-col pr-[6px] pl-[7px]">
            <MapView />
            <AttributeTable />
          </div>
          <Geoprocessing />
          <div className="flex w-[26px] shrink-0 items-start justify-end gap-[3px]">
            <button className="h-[66px] text-[9px] leading-[12px] whitespace-nowrap text-[#444] [writing-mode:vertical-rl]">Create Features</button>
            <i className="h-[66px] w-[5px] bg-[#c9c9c9]" />
          </div>
        </main>
      </div>
    </div>
  );
}
